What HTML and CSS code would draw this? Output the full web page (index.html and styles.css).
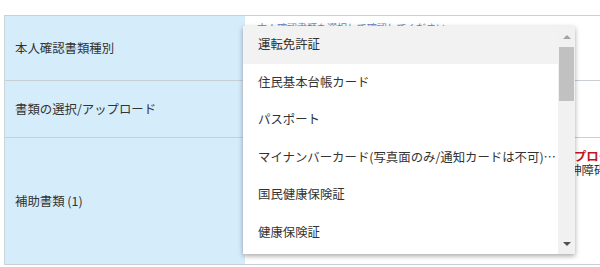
FILE: index.html
```html
<!DOCTYPE html>
<html lang="ja">
<head>
<meta charset="utf-8">
<link rel="stylesheet" href="styles.css">
</head>
<body>
<div class="form-table">
  <div class="row row-1">
    <div class="label">本人確認書類種別</div>
    <div class="value"><span class="hint">本人確認書類を選択して確認してください</span></div>
  </div>
  <div class="row row-2">
    <div class="label">書類の選択/アップロード</div>
    <div class="value"></div>
  </div>
  <div class="row row-3">
    <div class="label">補助書類 (1)</div>
    <div class="value">
      <p class="warn">補助書類として次の書類の中からいずれか1点をアップロードしてください</p>
      <p class="note">住民票の写し、年金手帳、身体障碍者手帳、精神障碍者保健福祉手帳など</p>
    </div>
  </div>
</div>

<div class="dropdown">
  <ul class="options">
    <li class="option is-active">運転免許証</li>
    <li class="option">住民基本台帳カード</li>
    <li class="option">パスポート</li>
    <li class="option">マイナンバーカード(写真面のみ/通知カードは不可)※両面</li>
    <li class="option">国民健康保険証</li>
    <li class="option">健康保険証</li>
  </ul>
  <div class="scrollbar">
    <div class="sb-btn"><span class="arrow-up"></span></div>
    <div class="sb-thumb"></div>
    <div class="sb-track"></div>
    <div class="sb-btn"><span class="arrow-down"></span></div>
  </div>
</div>
</body>
</html>
```

FILE: styles.css
```css
html, body {
  margin: 0;
  padding: 0;
  background: #fff;
  font-family: "Noto Sans CJK JP", "Noto Sans", sans-serif;
  color: #333;
  overflow: hidden;
}

.form-table {
  margin-top: 15px;
  margin-left: 4px;
  width: 640px;
  border-top: 1px solid #cfcfcf;
  border-left: 1px solid #c9d3da;
}

.row {
  display: grid;
  grid-template-columns: 240px 1fr;
  border-bottom: 1px solid #c9cfd4;
}

.row-1 { height: 64px; }
.row-2 { height: 56px; }
.row-3 { height: 126px; }

.label {
  background: #d5ecfb;
  display: flex;
  align-items: center;
  padding-left: 10px;
  font-size: 12.4px;
  color: #333;
}

.value {
  padding: 0 12px;
  font-size: 12.4px;
  position: relative;
}

.hint {
  display: block;
  margin-top: 6px;
  font-size: 10px;
  line-height: 12px;
  color: #6a86c4;
}

.row-3 .value {
  padding-top: 11px;
}

.warn {
  margin: 0;
  padding-left: 25px;
  white-space: nowrap;
  color: #c0161d;
  font-weight: bold;
  font-size: 12.4px;
  line-height: 14px;
}

.note {
  margin: 0;
  padding-left: 52px;
  white-space: nowrap;
  font-size: 12.4px;
  line-height: 15px;
  color: #333;
}

.dropdown {
  position: absolute;
  left: 243px;
  top: 26px;
  width: 332px;
  height: 228px;
  background: #fff;
  display: flex;
  box-shadow: 0 2px 5px rgba(0, 0, 0, 0.35);
}

.options {
  list-style: none;
  margin: 0;
  padding: 0;
  flex: 1;
  min-width: 0;
  overflow: hidden;
}

.option {
  height: 37.5px;
  line-height: 37.5px;
  padding: 0 1px 0 15px;
  font-size: 12.4px;
  color: #333;
  white-space: nowrap;
  overflow: hidden;
  text-overflow: ellipsis;
}

.option.is-active {
  background: #f2f2f2;
}

.scrollbar {
  width: 17px;
  background: #f1f1f1;
  display: flex;
  flex-direction: column;
}

.sb-btn {
  height: 21px;
  display: flex;
  align-items: center;
  justify-content: center;
}

.sb-btn:last-child {
  height: 20px;
}

.arrow-up {
  width: 0;
  height: 0;
  border-left: 4px solid transparent;
  border-right: 4px solid transparent;
  border-bottom: 4px solid #a3a3a3;
}

.arrow-down {
  width: 0;
  height: 0;
  border-left: 4px solid transparent;
  border-right: 4px solid transparent;
  border-top: 4px solid #505050;
}

.sb-thumb {
  height: 54px;
  margin: 0 1px;
  background: #c1c1c1;
}

.sb-track {
  flex: 1;
}
```
